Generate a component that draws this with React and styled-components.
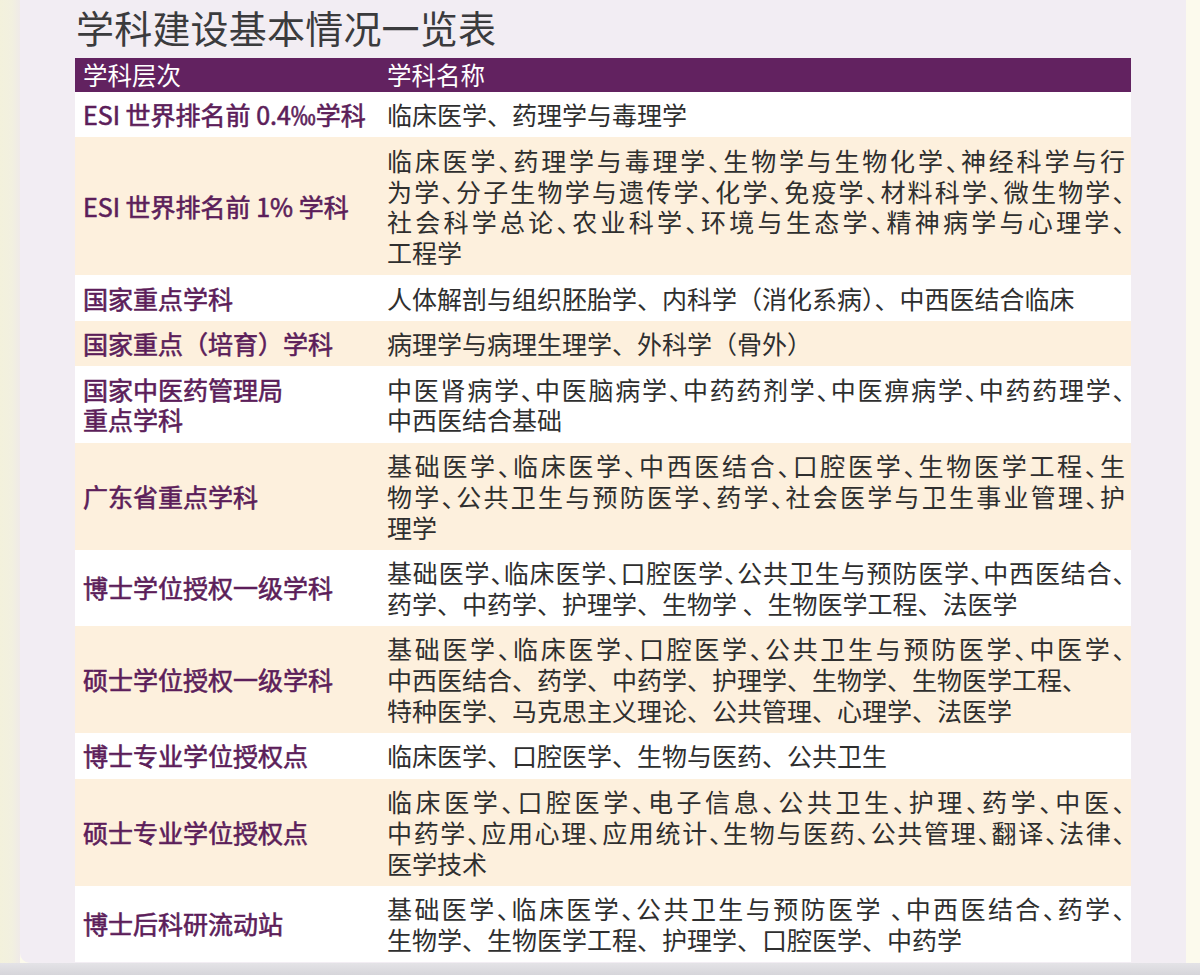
import React from "react";
import styled, { createGlobalStyle, css } from "styled-components";

const Global = createGlobalStyle`
  html, body { margin: 0; padding: 0; }
  body {
    background: #fcfaec;
    font-family: "Noto Sans CJK SC", "Noto Sans", "Liberation Sans", sans-serif;
  }
`;

const Page = styled.div`
  width: 1200px;
  height: 975px;
  display: flex;
  flex-direction: column;
  overflow: hidden;
`;

const Main = styled.div`
  flex: 1;
  display: flex;
  min-height: 0;
`;

const LeftEdge = styled.div`
  width: 20px;
  background: linear-gradient(90deg, #f3f1dc 0%, #f2f0e0 60%, #efeae8 100%);
`;

const RightEdge = styled.div`
  flex: 1;
  background: #fcfaed;
`;

const Sheet = styled.div`
  width: 1166px;
  background: #f2edf3;
  padding: 0 0 0 55px;
  box-sizing: border-box;
  border-bottom-left-radius: 10px;
  display: flex;
  flex-direction: column;
`;

const Title = styled.h1`
  margin: 0;
  font-size: 38px;
  line-height: 54px;
  font-weight: 400;
  color: #3b3b3d;
  letter-spacing: 0.2px;
  height: 58px;
  padding-left: 1px;
`;

const Table = styled.div`
  width: 1056px;
  display: flex;
  flex-direction: column;
`;

const Grid = styled.div`
  display: grid;
  grid-template-columns: 312px 1fr;
  align-items: center;
`;

const HeaderRow = styled(Grid)`
  height: 34px;
  background: #622260;
  color: #ffffff;
  font-size: 24.5px;
  line-height: 34px;
`;

const HeadCell = styled.div`
  padding-left: ${(p) => (p.$first ? "8px" : "0")};
`;

const Row = styled(Grid)`
  background: ${(p) => (p.$alt ? "#fdf0dd" : "#ffffff")};
`;

const Label = styled.div`
  padding-left: 8px;
  color: #5c1e5a;
  font-size: 25px;
  font-weight: 400;
  line-height: 30.85px;
  -webkit-text-stroke: 0.6px #5c1e5a;
`;

const Content = styled.div`
  padding: 7.3px 6px 7.3px 0;
  color: #2f2f2f;
  font-size: 25px;
  line-height: 30.85px;
`;

const Line = styled.div`
  white-space: pre;
  ${(p) =>
    p.$full &&
    css`
      white-space: pre-wrap;
      text-align: justify;
      text-align-last: justify;
      font-feature-settings: "halt";
    `}
`;

const rows = [
  {
    label: ["ESI 世界排名前 0.4‰学科"],
    lines: [["临床医学、药理学与毒理学"]],
  },
  {
    label: ["ESI 世界排名前 1% 学科"],
    lines: [
      ["临床医学、药理学与毒理学、生物学与生物化学、神经科学与行", true],
      ["为学、分子生物学与遗传学、化学、免疫学、材料科学、微生物学、", true],
      ["社会科学总论、农业科学、环境与生态学、精神病学与心理学、", true],
      ["工程学"],
    ],
  },
  {
    label: ["国家重点学科"],
    lines: [["人体解剖与组织胚胎学、内科学（消化系病）、中西医结合临床"]],
  },
  {
    label: ["国家重点（培育）学科"],
    lines: [["病理学与病理生理学、外科学（骨外）"]],
  },
  {
    label: ["国家中医药管理局", "重点学科"],
    lines: [
      ["中医肾病学、中医脑病学、中药药剂学、中医痹病学、中药药理学、", true],
      ["中西医结合基础"],
    ],
  },
  {
    label: ["广东省重点学科"],
    lines: [
      ["基础医学、临床医学、中西医结合、口腔医学、生物医学工程、生", true],
      ["物学、公共卫生与预防医学、药学、社会医学与卫生事业管理、护", true],
      ["理学"],
    ],
  },
  {
    label: ["博士学位授权一级学科"],
    lines: [
      ["基础医学、临床医学、口腔医学、公共卫生与预防医学、中西医结合、", true],
      ["药学、中药学、护理学、生物学 、生物医学工程、法医学"],
    ],
  },
  {
    label: ["硕士学位授权一级学科"],
    lines: [
      ["基础医学、临床医学、口腔医学、公共卫生与预防医学、中医学、", true],
      ["中西医结合、药学、中药学、护理学、生物学、生物医学工程、"],
      ["特种医学、马克思主义理论、公共管理、心理学、法医学"],
    ],
  },
  {
    label: ["博士专业学位授权点"],
    lines: [["临床医学、口腔医学、生物与医药、公共卫生"]],
  },
  {
    label: ["硕士专业学位授权点"],
    lines: [
      ["临床医学、口腔医学、电子信息、公共卫生、护理、药学、中医、", true],
      ["中药学、应用心理、应用统计、生物与医药、公共管理、翻译、法律、", true],
      ["医学技术"],
    ],
  },
  {
    label: ["博士后科研流动站"],
    lines: [
      ["基础医学、临床医学、公共卫生与预防医学 、中西医结合、药学、", true],
      ["生物学、生物医学工程、护理学、口腔医学、中药学"],
    ],
  },
];

const BottomBar = styled.div`
  height: 12px;
  background: linear-gradient(180deg, #e4e3e7 0%, #d6d5da 100%);
`;

export default function App() {
  return (
    <>
      <Global />
      <Page>
        <Main>
          <LeftEdge />
          <Sheet>
            <Title>学科建设基本情况一览表</Title>
            <Table>
              <HeaderRow>
                <HeadCell $first>学科层次</HeadCell>
                <HeadCell>学科名称</HeadCell>
              </HeaderRow>
              {rows.map((r, i) => (
                <Row key={i} $alt={i % 2 === 1}>
                  <Label>
                    {r.label.map((l, j) => (
                      <div key={j}>{l}</div>
                    ))}
                  </Label>
                  <Content>
                    {r.lines.map(([t, full], j) => (
                      <Line key={j} $full={!!full}>
                        {t}
                      </Line>
                    ))}
                  </Content>
                </Row>
              ))}
            </Table>
          </Sheet>
          <RightEdge />
        </Main>
        <BottomBar />
      </Page>
    </>
  );
}
